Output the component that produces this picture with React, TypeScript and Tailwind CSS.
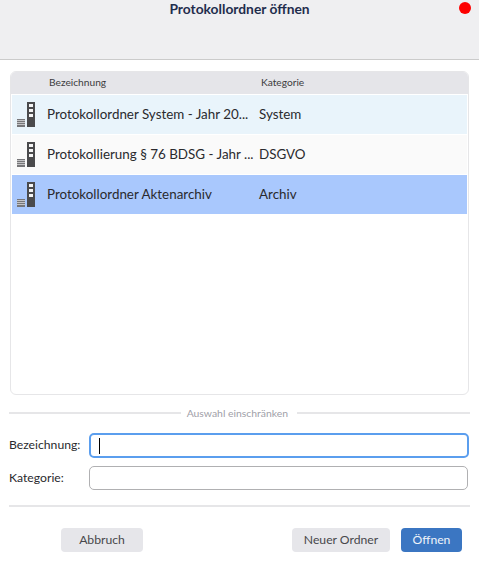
const ROWS = [
  { name: "Protokollordner System - Jahr 20...", category: "System", bg: "bg-[#e9f4fb]" },
  { name: "Protokollierung § 76 BDSG - Jahr ...", category: "DSGVO", bg: "bg-[#fafafa]" },
  { name: "Protokollordner Aktenarchiv", category: "Archiv", bg: "bg-[#a9c8fd]" },
];

function FolderIcon() {
  return (
    <svg width="26" height="26" viewBox="0 0 26 26" className="shrink-0">
      <rect x="11" y="0" width="8" height="25" fill="#4a4a4c" />
      <rect x="13" y="2" width="4" height="3" fill="#f4f4f4" />
      <rect x="13" y="7" width="4" height="3" fill="#f4f4f4" />
      <rect x="13" y="12" width="4" height="3" fill="#f4f4f4" />
      <rect x="1" y="17" width="8" height="8" fill="#77777a" />
      <rect x="1" y="18" width="8" height="1" fill="#c4c4c6" />
      <rect x="1" y="20" width="8" height="1" fill="#c4c4c6" />
      <rect x="1" y="22" width="8" height="1" fill="#c4c4c6" />
    </svg>
  );
}

export default function App() {
  return (
    <div className="relative w-[479px] h-[561px] bg-white overflow-hidden font-['Lato','Noto_Sans',sans-serif] text-[#2a2a2e]">
      {/* Title bar */}
      <header className="h-[60px] bg-[#efeff1] border-b border-[#cbcbcb] pt-[1px] text-center text-[13.8px] leading-[16px] font-bold text-[#1f2d4d]">
        Protokollordner öffnen
      </header>
      <span className="absolute right-[8px] top-[2px] w-3 h-3 rounded-full bg-[#fd0000]" />

      <main className="px-[10px] pt-[11px]">
        {/* Table */}
        <div className="h-[324px] border border-[#e6e6e8] rounded-md overflow-hidden">
          <div className="h-[23px] bg-[#e5e5e9] flex items-center text-[10.2px] text-[#3c3c40] -mx-px -mt-px">
            <span className="w-[250px] pl-[39px]">Bezeichnung</span>
            <span className="pl-[1px]">Kategorie</span>
          </div>
          <div className="pt-px px-px">
            {ROWS.map((row) => (
              <div key={row.name} className={`h-[39px] mb-px flex items-center text-[13.4px] ${row.bg}`}>
                <span className="w-[35px] pl-[4px] pt-[1px]">
                  <FolderIcon />
                </span>
                <span className="w-[212px] whitespace-nowrap">{row.name}</span>
                <span>{row.category}</span>
              </div>
            ))}
          </div>
        </div>

        {/* Filter divider */}
        <div className="mt-[11px] -mx-px flex items-center text-[10.4px] text-[#a0a0a8]">
          <div className="flex-1 h-[2px] bg-[#e6e6e8]" />
          <span className="ml-[6px] mr-[9px] leading-[14px]">Auswahl einschränken</span>
          <div className="w-[173px] h-[2px] bg-[#e6e6e8]" />
        </div>

        {/* Filter fields */}
        <div className="mt-[13px] -ml-px grid grid-cols-[80px_379px] gap-y-[8px] items-center text-[12.2px]">
          <label>Bezeichnung:</label>
          <div className="h-[25px] w-[380px] border-2 border-[#5b9eee] rounded-[5px] flex items-center pl-[8px]">
            <span className="w-px h-[16px] bg-black" />
          </div>
          <label>Kategorie:</label>
          <div className="h-[24px] w-[379px] border border-[#b0b0b2] rounded-[5px]" />
        </div>

        <div className="mt-[15px] -mx-px h-[2px] bg-[#e6e6e8]" />

        {/* Actions */}
        <div className="mt-[21px] flex items-center text-[12.2px]">
          <button className="ml-[51px] w-[82px] h-[24px] rounded-[4px] bg-[#e6e6ea] text-[#48484c]">Abbruch</button>
          <button className="ml-auto w-[98px] h-[24px] rounded-[4px] bg-[#e6e6ea] text-[#48484c]">Neuer Ordner</button>
          <button className="ml-[11px] mr-[7px] w-[61px] h-[24px] rounded-[4px] bg-[#3b76c2] text-[#eef3fa]">Öffnen</button>
        </div>
      </main>
    </div>
  );
}
